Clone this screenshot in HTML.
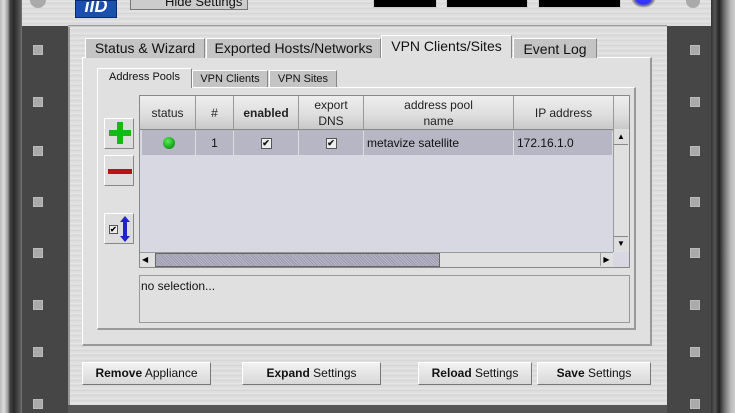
<!DOCTYPE html>
<html><head><meta charset="utf-8"><style>
*{margin:0;padding:0;box-sizing:border-box}
body{width:735px;height:413px;overflow:hidden;position:relative;font-family:"Liberation Sans",sans-serif;background:#ccc}
.a{position:absolute}
.metal{background:repeating-linear-gradient(180deg,#dcdcdc 0,#e6e6e6 2px,#d4d4d4 3px,#e0e0e0 5px)}
.sq{position:absolute;width:10px;height:10px;background:#aaa;border:1px solid #bbb}
.tab{position:absolute;background:#c4c4c4;border:1px solid #fff;border-bottom:none;border-right:1px solid #888;font-size:14px;color:#111;text-align:center}
.stab{position:absolute;background:#c4c4c4;border:1px solid #fff;border-bottom:none;border-right:1px solid #888;font-size:11px;color:#111;text-align:center}
.th{position:absolute;top:0;height:34px;background:linear-gradient(#eee,#ddd 60%,#c8c8c8);border-right:1px solid #999;border-bottom:1px solid #888;font-size:12px;color:#222;text-align:center;display:flex;align-items:center;justify-content:center;line-height:16px}
.td{position:absolute;top:1px;height:24px;border-right:1px solid #ddd;font-size:12px;color:#111;display:flex;align-items:center}
.cb{width:11px;height:11px;border:1px solid #555;background:#eee;font-size:9px;line-height:9px;text-align:center;font-weight:bold;margin:auto}
.btn{position:absolute;top:362px;height:23px;background:linear-gradient(#f2f2f2,#d8d8d8);border:1px solid #fff;border-right-color:#777;border-bottom-color:#777;font-size:12px;color:#111;text-align:center;line-height:21px}
.ib{position:absolute;left:104px;width:30px;height:31px;background:#ddd;border:1px solid #fff;border-right-color:#888;border-bottom-color:#888}
</style></head><body>
<div class="a" style="left:0;top:0;width:22px;height:413px;background:linear-gradient(90deg,#bbb 0,#ddd 4px,#999 8px,#444 10px,#2a2a2a 14px,#555 20px,#777 22px)"></div>
<div class="a metal" style="left:22px;top:0;width:46px;height:26px"></div>
<div class="a" style="left:30px;top:0;width:16px;height:8px;border-radius:0 0 8px 8px;background:#aaa"></div>
<div class="a" style="left:22px;top:26px;width:46px;height:387px;background:#464646"></div>
<div class="sq" style="left:33px;top:45px"></div><div class="sq" style="left:33px;top:97px"></div><div class="sq" style="left:33px;top:146px"></div><div class="sq" style="left:33px;top:197px"></div><div class="sq" style="left:33px;top:248px"></div><div class="sq" style="left:33px;top:300px"></div><div class="sq" style="left:33px;top:347px"></div><div class="sq" style="left:33px;top:399px"></div>
<div class="a metal" style="left:667px;top:0;width:44px;height:26px"></div>
<div class="a" style="left:686px;top:0;width:14px;height:8px;border-radius:0 0 7px 7px;background:#aaa"></div>
<div class="a" style="left:667px;top:26px;width:44px;height:387px;background:#464646"></div>
<div class="a" style="left:711px;top:0;width:24px;height:413px;background:linear-gradient(90deg,#333,#555 4px,#222 8px,#777 14px,#bbb 20px,#ccc)"></div>
<div class="sq" style="left:690px;top:45px"></div><div class="sq" style="left:690px;top:97px"></div><div class="sq" style="left:690px;top:146px"></div><div class="sq" style="left:690px;top:197px"></div><div class="sq" style="left:690px;top:248px"></div><div class="sq" style="left:690px;top:300px"></div><div class="sq" style="left:690px;top:347px"></div><div class="sq" style="left:690px;top:399px"></div>
<div class="a metal" style="left:68px;top:0;width:599px;height:26px;border-bottom:1px solid #999"></div>
<div class="a metal" style="left:68px;top:27px;width:599px;height:379px;border-left:2px solid #999"></div>
<div class="a" style="left:68px;top:405px;width:599px;height:8px;background:#555"></div>
<div class="a" style="left:75px;top:0;width:42px;height:18px;background:#1a4fae;border:1px solid #0a2a70;overflow:hidden"><div style="color:#fff;font-style:italic;font-weight:bold;font-size:18px;line-height:10px;text-align:center">ilD</div></div>
<div class="a" style="left:130px;top:0;width:118px;height:10px;background:#ccc;border:1px solid #777;border-top:none;overflow:hidden"><div style="font-size:13px;line-height:4px;padding-left:34px;color:#111">Hide Settings</div></div>
<div class="a" style="left:373px;top:0;width:64px;height:8px;background:#000;border:1px solid #ccc;border-top:none"></div>
<div class="a" style="left:446px;top:0;width:82px;height:8px;background:#000;border:1px solid #ccc;border-top:none"></div>
<div class="a" style="left:538px;top:0;width:83px;height:8px;background:#000;border:1px solid #ccc;border-top:none"></div>
<div class="a" style="left:631px;top:-10px;width:25px;height:18px;border-radius:50%;background:radial-gradient(#33f 40%,#888 55%,#ddd 70%)"></div>
<div class="a" style="left:82px;top:57px;width:570px;height:289px;background:#e0e0e0;border:1px solid #fff;border-right:2px solid #999;border-bottom:2px solid #999"></div>
<div class="tab" style="left:85px;top:38px;width:120px;height:20px;line-height:18px">Status &amp; Wizard</div>
<div class="tab" style="left:206px;top:38px;width:175px;height:20px;line-height:18px">Exported Hosts/Networks</div>
<div class="tab" style="left:381px;top:35px;width:131px;height:23px;line-height:20px;background:#e0e0e0">VPN Clients/Sites</div>
<div class="tab" style="left:513px;top:38px;width:84px;height:20px;line-height:20px">Event Log</div>
<div class="a" style="left:97px;top:87px;width:539px;height:243px;border:1px solid #fff;border-right:2px solid #999;border-bottom:2px solid #999"></div>
<div class="stab" style="left:97px;top:68px;width:95px;height:20px;line-height:17px;background:#e0e0e0">Address Pools</div>
<div class="stab" style="left:192px;top:70px;width:76px;height:17px;line-height:17px">VPN Clients</div>
<div class="stab" style="left:269px;top:70px;width:68px;height:17px;line-height:17px">VPN Sites</div>
<div class="ib" style="top:118px"><div class="a" style="left:12px;top:3px;width:6px;height:22px;background:#1b1"></div><div class="a" style="left:4px;top:11px;width:22px;height:6px;background:#1b1"></div></div>
<div class="ib" style="top:155px"><div class="a" style="left:3px;top:13px;width:24px;height:5px;background:#b11"></div></div>
<div class="ib" style="top:213px"><div class="a" style="left:4px;top:11px;width:9px;height:9px;border:1px solid #555;background:#eee;font-size:8px;line-height:7px;font-weight:bold">✔</div>
<svg class="a" style="left:14px;top:2px" width="12" height="26" viewBox="0 0 12 26"><path d="M6 0L11 6H8V20H11L6 26L1 20H4V6H1Z" fill="#22c"/></svg></div>
<div class="a" style="left:139px;top:95px;width:491px;height:173px;background:#d8d8e2;border:1px solid #888"></div>
<div class="a" style="left:140px;top:96px;width:489px;height:34px">
<div class="th" style="left:0;width:56px">status</div>
<div class="th" style="left:56px;width:38px">#</div>
<div class="th" style="left:94px;width:65px;font-weight:bold">enabled</div>
<div class="th" style="left:159px;width:65px">export<br>DNS</div>
<div class="th" style="left:224px;width:150px">address pool<br>name</div>
<div class="th" style="left:374px;width:100px">IP address</div>
<div class="th" style="left:474px;width:15px;border-right:none"></div>
</div>
<div class="a" style="left:142px;top:130px;width:471px;height:25px;background:#b6b6c4">
<div class="td" style="left:0;width:54px"><div style="width:12px;height:12px;border-radius:50%;background:radial-gradient(circle at 40% 35%,#5e5,#070);margin:auto"></div></div>
<div class="td" style="left:54px;width:38px;justify-content:center">1</div>
<div class="td" style="left:92px;width:65px"><div class="cb">✔</div></div>
<div class="td" style="left:157px;width:65px"><div class="cb">✔</div></div>
<div class="td" style="left:222px;width:150px;padding-left:3px">metavize satellite</div>
<div class="td" style="left:372px;width:99px;padding-left:3px">172.16.1.0</div>
</div>
<div class="a" style="left:613px;top:129px;width:16px;height:123px;background:#e0e0e0;border-left:1px solid #999"></div>
<div class="a" style="left:614px;top:130px;width:14px;height:15px;background:#ddd;border-bottom:1px solid #888;font-size:8px;text-align:center;line-height:14px">▲</div>
<div class="a" style="left:614px;top:236px;width:14px;height:15px;background:#ddd;border-top:1px solid #888;font-size:8px;text-align:center;line-height:14px">▼</div>
<div class="a" style="left:140px;top:252px;width:473px;height:15px;background:#e0e0e0;border-top:1px solid #999"></div>
<div class="a" style="left:142px;top:253px;width:12px;height:13px;font-size:8px;line-height:13px">◀</div>
<div class="a" style="left:155px;top:253px;width:285px;height:14px;background:repeating-linear-gradient(45deg,#9a9aae 0,#9a9aae 1px,#b8b8c6 1px,#b8b8c6 2px);border:1px solid #666"></div>
<div class="a" style="left:600px;top:253px;width:12px;height:13px;font-size:8px;line-height:13px;border-left:1px solid #999;text-align:center">▶</div>
<div class="a" style="left:139px;top:275px;width:491px;height:48px;background:#e0e0e0;border:1px solid #999;font-size:12px;padding:3px 1px;color:#111">no selection...</div>
<div class="btn" style="left:82px;width:129px"><b>Remove</b> Appliance</div>
<div class="btn" style="left:242px;width:139px"><b>Expand</b> Settings</div>
<div class="btn" style="left:418px;width:114px"><b>Reload</b> Settings</div>
<div class="btn" style="left:537px;width:114px"><b>Save</b> Settings</div>
</body></html>
